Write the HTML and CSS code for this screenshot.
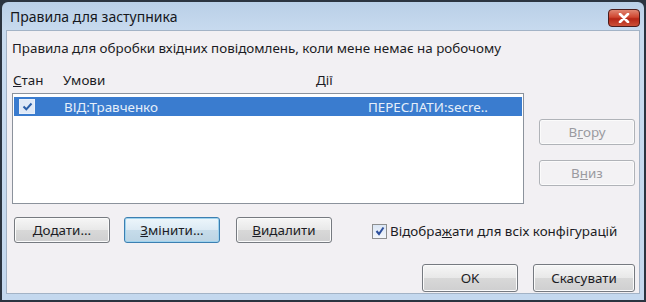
FILE: index.html
```html
<!DOCTYPE html>
<html lang="uk">
<head>
  <meta charset="UTF-8" />
  <title>Правила для заступника</title>
  <link rel="stylesheet" href="styles.css">
</head>
<body>
  <div class="window">
    <div class="titlebar">
      <span class="title">Правила для заступника</span>
      <div class="close-btn">
        <svg width="12" height="10" viewBox="0 0 12 10"><path d="M2 1 L10 9 M10 1 L2 9" stroke="#ffffff" stroke-width="2.6" stroke-linecap="round"/></svg>
      </div>
    </div>

    <div class="client">
      <div class="intro">Правила для обробки вхідних повідомлень, коли мене немає на робочому</div>

      <div class="headers">
        <span class="h-state"><u>С</u>тан</span>
        <span class="h-cond">Умови</span>
        <span class="h-act">Дії</span>
      </div>

      <div class="main">
        <div class="list">
          <div class="row selected">
            <span class="col-state"><span class="box"><svg width="11" height="9" viewBox="0 0 11 9"><path d="M1.5 4.5 L4.3 7.3 L9.5 1.5" fill="none" stroke="#2a5fa8" stroke-width="2"/></svg></span></span>
            <span class="col-cond">ВІД:Травченко</span>
            <span class="col-act">ПЕРЕСЛАТИ:secre..</span>
          </div>
        </div>
        <div class="side">
          <button class="btn side-btn" disabled>В<u>г</u>ору</button>
          <button class="btn side-btn" disabled>В<u>н</u>из</button>
        </div>
      </div>

      <div class="actions">
        <button class="btn"><u>Д</u>одати...</button>
        <button class="btn focused"><u>З</u>мінити...</button>
        <button class="btn"><u>В</u>идалити</button>
        <label class="check">
          <span class="cbox"><svg width="10" height="10" viewBox="0 0 10 10"><path d="M1.5 5 L4 8 L8.5 1.5" fill="none" stroke="#2d4f9c" stroke-width="2"/></svg></span>
          Відобра<u>ж</u>ати для всіх конфігурацій
        </label>
      </div>

      <div class="footer">
        <button class="btn">OK</button>
        <button class="btn">Скасувати</button>
      </div>
    </div>
  </div>
</body>
</html>
```

FILE: styles.css
```css
body {
  margin: 0;
  background: #2b3440;
  font-family: "Noto Sans", "Open Sans", sans-serif;
  font-size: 13.4px;
  color: #1c1c24;
}
.window {
  width: 642px;
  height: 298px;
  margin: 2px 0 0 2px;
  background: linear-gradient(#b9cfe7, #c8dbef 30px, #c4d8ee);
  border-radius: 6px 6px 0 0;
  padding: 0 4px 6px 4px;
  box-sizing: border-box;
}
.titlebar {
  height: 28px;
  display: flex;
  align-items: center;
  justify-content: space-between;
  padding: 0 0 0 4px;
}
.title {
  font-size: 14px;
  color: #15171c;
}
.close-btn {
  width: 32px;
  height: 18px;
  margin-top: 4px;
  box-sizing: border-box;
  border: 1px solid #4a1c1c;
  border-radius: 4px;
  background: #c8412c linear-gradient(#e08672, #cf4630 45%, #b52616 55%, #cc5038);
  display: flex;
  align-items: center;
  justify-content: center;
}
.client {
  height: 264px;
  background: #f2f0f3;
  border: 1px solid #a3b3c6;
  box-sizing: border-box;
  padding: 0 4px 0 5px;
}
.intro {
  padding: 9px 0 0 0;
  line-height: 16px;
}
.headers {
  display: flex;
  margin-top: 17px;
  line-height: 14px;
  padding-left: 1px;
}
.h-state { width: 50px; }
.h-cond { width: 253px; }
u { text-decoration: underline; }
.main {
  display: flex;
  margin-top: 6px;
}
.list {
  width: 513px;
  height: 111px;
  box-sizing: border-box;
  background: #fff;
  border: 1px solid #8b929c;
  padding: 3px 1px;
}
.row {
  display: flex;
  align-items: center;
  height: 19px;
}
.row.selected {
  background: #3a7ccf;
  color: #e6effa;
}
.col-state {
  width: 50px;
  padding-left: 5px;
  box-sizing: border-box;
  display: flex;
}
.box {
  width: 14px;
  height: 13px;
  border: 1px solid #e9f0fa;
  background: #dfe9f7;
  display: flex;
  align-items: center;
  justify-content: center;
}
.col-cond { width: 304px; }
.side {
  display: flex;
  flex-direction: column;
  gap: 15px;
  margin: 26px 0 0 15px;
}
.btn {
  font-family: inherit;
  font-size: 13.4px;
  color: #1c1c24;
  height: 26px;
  width: 96px;
  padding: 0;
  border: 1px solid #767a80;
  border-radius: 3px;
  background: linear-gradient(#f6f6f6, #e8e8e8 50%, #d8d8d8 51%, #cfcfd0);
  box-shadow: inset 0 0 0 1px #fbfbfb;
}
.btn:disabled {
  color: #9a9aa0;
  border-color: #b0b3b8;
  background: #f3f2f4;
}
.btn.focused {
  border-color: #3c7fb1;
  box-shadow: inset 0 0 0 1px #9fd3ee;
  background: linear-gradient(#edf6fb, #dceaf4 50%, #c6dcea 51%, #bcd4e4);
}
.actions {
  display: flex;
  align-items: center;
  margin-top: 13px;
  padding-left: 2px;
}
.actions .btn {
  width: 96px;
  height: 26px;
  margin-right: 14px;
}
.actions .btn:nth-child(2) { margin-right: 16px; }
.check {
  display: flex;
  align-items: center;
  margin-left: 26px;
  margin-top: 2px;
  white-space: nowrap;
}
.cbox {
  width: 13px;
  height: 13px;
  border: 1px solid #8e8f8f;
  background: linear-gradient(#dbe6f5, #f4f7fb);
  display: flex;
  align-items: center;
  justify-content: center;
  margin-right: 3px;
}
.footer {
  display: flex;
  justify-content: flex-end;
  gap: 15px;
  margin-top: 21px;
}
.footer .btn {
  width: 96px;
  height: 28px;
}
.footer .btn:last-child { width: 102px; }
```
